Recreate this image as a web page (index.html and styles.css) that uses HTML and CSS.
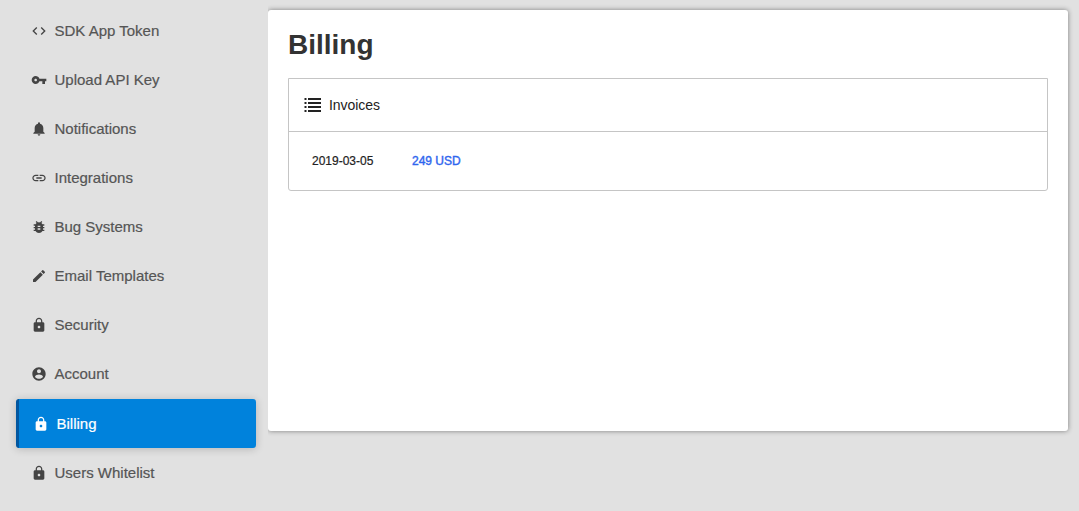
FILE: index.html
```html
<!DOCTYPE html>
<html lang="en">
<head>
<meta charset="utf-8">
<title>Billing</title>
<link rel="stylesheet" href="styles.css">
</head>
<body>
<svg width="0" height="0" class="defs">
  <symbol id="lock" viewBox="0 0 24 24"><path d="M18 8h-1V6c0-2.760-2.240-5-5-5S7 3.240 7 6v2H6c-1.100 0-2 .9-2 2v10c0 1.100.9 2 2 2h12c1.100 0 2-.9 2-2V10c0-1.100-.9-2-2-2zm-6 9c-1.100 0-2-.9-2-2s.9-2 2-2 2 .9 2 2-.9 2-2 2zm3.100-9H8.900V6c0-1.710 1.390-3.100 3.100-3.100s3.100 1.390 3.100 3.100v2z"/></symbol>
</svg>
<div class="layout">
  <nav class="sidebar">
    <a class="item"><svg class="icon" viewBox="0 0 24 24"><path d="M9.400 16.600 4.800 12l4.600-4.600L8 6l-6 6 6 6 1.400-1.400zm5.200 0 4.600-4.600-4.600-4.600L16 6l6 6-6 6-1.400-1.400z"/></svg><span>SDK App Token</span></a>
    <a class="item"><svg class="icon" viewBox="0 0 24 24"><path d="M12.650 10C11.830 7.670 9.610 6 7 6c-3.310 0-6 2.690-6 6s2.690 6 6 6c2.610 0 4.830-1.670 5.650-4H17v4h4v-4h2v-4H12.650zM7 14c-1.100 0-2-.9-2-2s.9-2 2-2 2 .9 2 2-.9 2-2 2z"/></svg><span>Upload API Key</span></a>
    <a class="item"><svg class="icon" viewBox="0 0 24 24"><path d="M12 22c1.100 0 2-.9 2-2h-4c0 1.100.9 2 2 2zM18.500 16v-5.500c0-3.070-2.130-5.640-5-6.320V3.500a1.500 1.500 0 0 0-3 0v.68c-2.870.68-5 3.250-5 6.320V16l-2 2v1h17v-1l-2-2z"/></svg><span>Notifications</span></a>
    <a class="item"><svg class="icon" viewBox="0 0 24 24"><path d="M3.900 12c0-1.710 1.390-3.100 3.100-3.100h4V7H7c-2.760 0-5 2.240-5 5s2.240 5 5 5h4v-1.900H7c-1.710 0-3.100-1.390-3.100-3.100zM8 13h8v-2H8v2zm9-6h-4v1.900h4c1.710 0 3.100 1.390 3.100 3.100s-1.390 3.100-3.100 3.100h-4V17h4c2.760 0 5-2.240 5-5s-2.240-5-5-5z"/></svg><span>Integrations</span></a>
    <a class="item"><svg class="icon" viewBox="0 0 24 24"><path d="M20 8h-2.810c-.45-.78-1.070-1.450-1.820-1.960L17 4.410 15.590 3l-2.170 2.170C12.960 5.060 12.490 5 12 5s-.96.06-1.410.17L8.410 3 7 4.410l1.620 1.630C7.880 6.550 7.260 7.220 6.810 8H4v2h2.090c-.05.33-.09.66-.09 1v1H4v2h2v1c0 .34.04.67.09 1H4v2h2.810c1.040 1.790 2.970 3 5.190 3s4.150-1.210 5.190-3H20v-2h-2.090c.05-.33.09-.66.09-1v-1h2v-2h-2v-1c0-.34-.04-.67-.09-1H20V8zm-6 8h-4v-2h4v2zm0-4h-4v-2h4v2z"/></svg><span>Bug Systems</span></a>
    <a class="item"><svg class="icon" viewBox="0 0 24 24"><path d="M3 17.250V21h3.750L17.810 9.940l-3.750-3.750L3 17.250zM20.710 7.040a1 1 0 0 0 0-1.410l-2.340-2.340a1 1 0 0 0-1.410 0l-1.830 1.830 3.750 3.750 1.830-1.830z"/></svg><span>Email Templates</span></a>
    <a class="item"><svg class="icon"><use href="#lock"/></svg><span>Security</span></a>
    <a class="item"><svg class="icon" viewBox="0 0 24 24"><path d="M12 2C6.480 2 2 6.480 2 12s4.480 10 10 10 10-4.480 10-10S17.520 2 12 2zm0 3c1.660 0 3 1.340 3 3s-1.340 3-3 3-3-1.340-3-3 1.340-3 3-3zm0 14.200c-2.500 0-4.710-1.280-6-3.220.03-1.990 4-3.080 6-3.080 1.990 0 5.970 1.090 6 3.080-1.290 1.940-3.500 3.220-6 3.220z"/></svg><span>Account</span></a>
    <a class="item active"><svg class="icon"><use href="#lock"/></svg><span>Billing</span></a>
    <a class="item"><svg class="icon"><use href="#lock"/></svg><span>Users Whitelist</span></a>
  </nav>
  <main class="panel">
    <h1>Billing</h1>
    <section class="card">
      <header class="card-head">
        <svg class="list-icon" viewBox="0 0 17 14"><path d="M.5 0h2v2h-2zM4 0h13v2H4zM.5 4h2v2h-2zM4 4h13v2H4zM.5 8h2v2h-2zM4 8h13v2H4zM.5 12h2v2h-2zM4 12h13v2H4z"/></svg>
        <span>Invoices</span>
      </header>
      <div class="invoice"><span class="date">2019-03-05</span><a class="amount">249 USD</a></div>
    </section>
  </main>
</div>
</body>
</html>
```
FILE: styles.css
```css
* { box-sizing: border-box; }
body {
  margin: 0;
  height: 511px;
  overflow: hidden;
  background: #e1e1e1;
  font-family: "Liberation Sans", Arial, sans-serif;
}
.defs { display: block; }
.layout { display: flex; align-items: flex-start; }
.sidebar {
  position: relative;
  z-index: 1;
  width: 268px;
  height: 511px;
  padding: 6px 12px 0 16px;
  background: #e1e1e1;
}
.item {
  display: flex;
  align-items: center;
  gap: 7.5px;
  height: 49px;
  padding-left: 15px;
  color: #555;
  font-size: 15px;
  -webkit-text-stroke: .2px currentColor;
}
.icon { width: 16px; height: 16px; fill: #444; flex: none; }
.active {
  margin-top: 1px;
  padding-left: 14px;
  border-left: 3px solid #0056a0;
  border-radius: 3px;
  background: #0082dc;
  color: #fff;
  box-shadow: 0 1px 8px rgba(0, 0, 0, .2);
}
.active .icon { fill: #fff; }
.panel {
  width: 800px;
  height: 421px;
  margin-top: 10px;
  padding: 18px 20px;
  background: #fff;
  border-radius: 3px;
  box-shadow: 0 0 5px rgba(0, 0, 0, .45);
}
h1 { margin: 0 0 16px; font-size: 28px; line-height: 34px; color: #333; }
.card { height: 113px; border: 1px solid #c5c5c5; border-radius: 0 0 3px 3px; }
.card-head {
  display: flex;
  align-items: center;
  gap: 8px;
  height: 53px;
  padding-left: 15px;
  border-bottom: 1px solid #c5c5c5;
  font-size: 14px;
  letter-spacing: -.05px;
  color: #222;
}
.list-icon { width: 17px; height: 14px; fill: #222; }
.invoice { display: flex; align-items: center; height: 58px; padding-left: 23px; font-size: 12px; color: #222; -webkit-text-stroke: .2px currentColor; }
.date { width: 100px; }
.amount { color: #2f66ee; -webkit-text-stroke: .4px currentColor; }
```
